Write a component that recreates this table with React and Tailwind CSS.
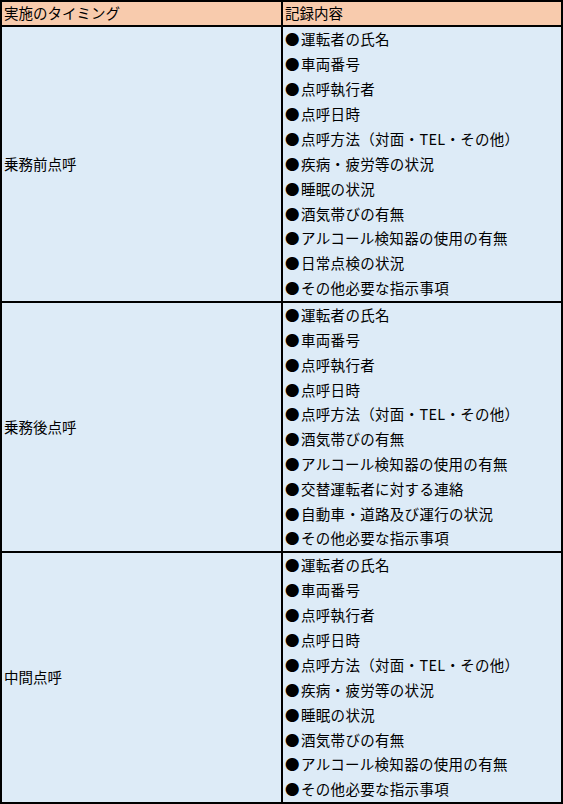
import React from 'react';

const groups = [
  {
    label: '乗務前点呼',
    h: 'h-[276px]',
    items: [
      '運転者の氏名',
      '車両番号',
      '点呼執行者',
      '点呼日時',
      '点呼方法（対面・TEL・その他）',
      '疾病・疲労等の状況',
      '睡眠の状況',
      '酒気帯びの有無',
      'アルコール検知器の使用の有無',
      '日常点検の状況',
      'その他必要な指示事項',
    ],
  },
  {
    label: '乗務後点呼',
    h: 'h-[250px]',
    items: [
      '運転者の氏名',
      '車両番号',
      '点呼執行者',
      '点呼日時',
      '点呼方法（対面・TEL・その他）',
      '酒気帯びの有無',
      'アルコール検知器の使用の有無',
      '交替運転者に対する連絡',
      '自動車・道路及び運行の状況',
      'その他必要な指示事項',
    ],
  },
  {
    label: '中間点呼',
    h: 'h-[249px]',
    items: [
      '運転者の氏名',
      '車両番号',
      '点呼執行者',
      '点呼日時',
      '点呼方法（対面・TEL・その他）',
      '疾病・疲労等の状況',
      '睡眠の状況',
      '酒気帯びの有無',
      'アルコール検知器の使用の有無',
      'その他必要な指示事項',
    ],
  },
];

export default function App() {
  return (
    <div
      className="w-[563px] h-[804px] border-2 border-black bg-[#ddebf7] text-[14.5px] text-black flex flex-col"
      style={{ fontFamily: '"Noto Sans CJK JP", "Noto Sans", sans-serif' }}
    >
      {/* header */}
      <div className="flex h-[25px] shrink-0 border-b-2 border-black bg-[#f8cbad]">
        <div className="w-[281px] border-r-2 border-black pl-[2px] flex items-center leading-none">
          実施のタイミング
        </div>
        <div className="flex-1 pl-[2px] flex items-center leading-none">記録内容</div>
      </div>

      {groups.map((g, gi) => (
        <div
          key={g.label}
          className={`flex shrink-0 ${g.h} ${gi < groups.length - 1 ? 'border-b-2 border-black' : ''}`}
        >
          <div className="w-[281px] border-r-2 border-black pl-[2px] flex items-center leading-none">
            {g.label}
          </div>
          <div className="flex-1 flex flex-col pl-[2px]">
            {g.items.map((it, i) => (
              <div key={i} className="flex-1 flex items-center leading-none whitespace-nowrap tracking-[0.3px]">
                <span className="inline-block w-[16px]">●</span>
                {it}
              </div>
            ))}
          </div>
        </div>
      ))}
    </div>
  );
}
